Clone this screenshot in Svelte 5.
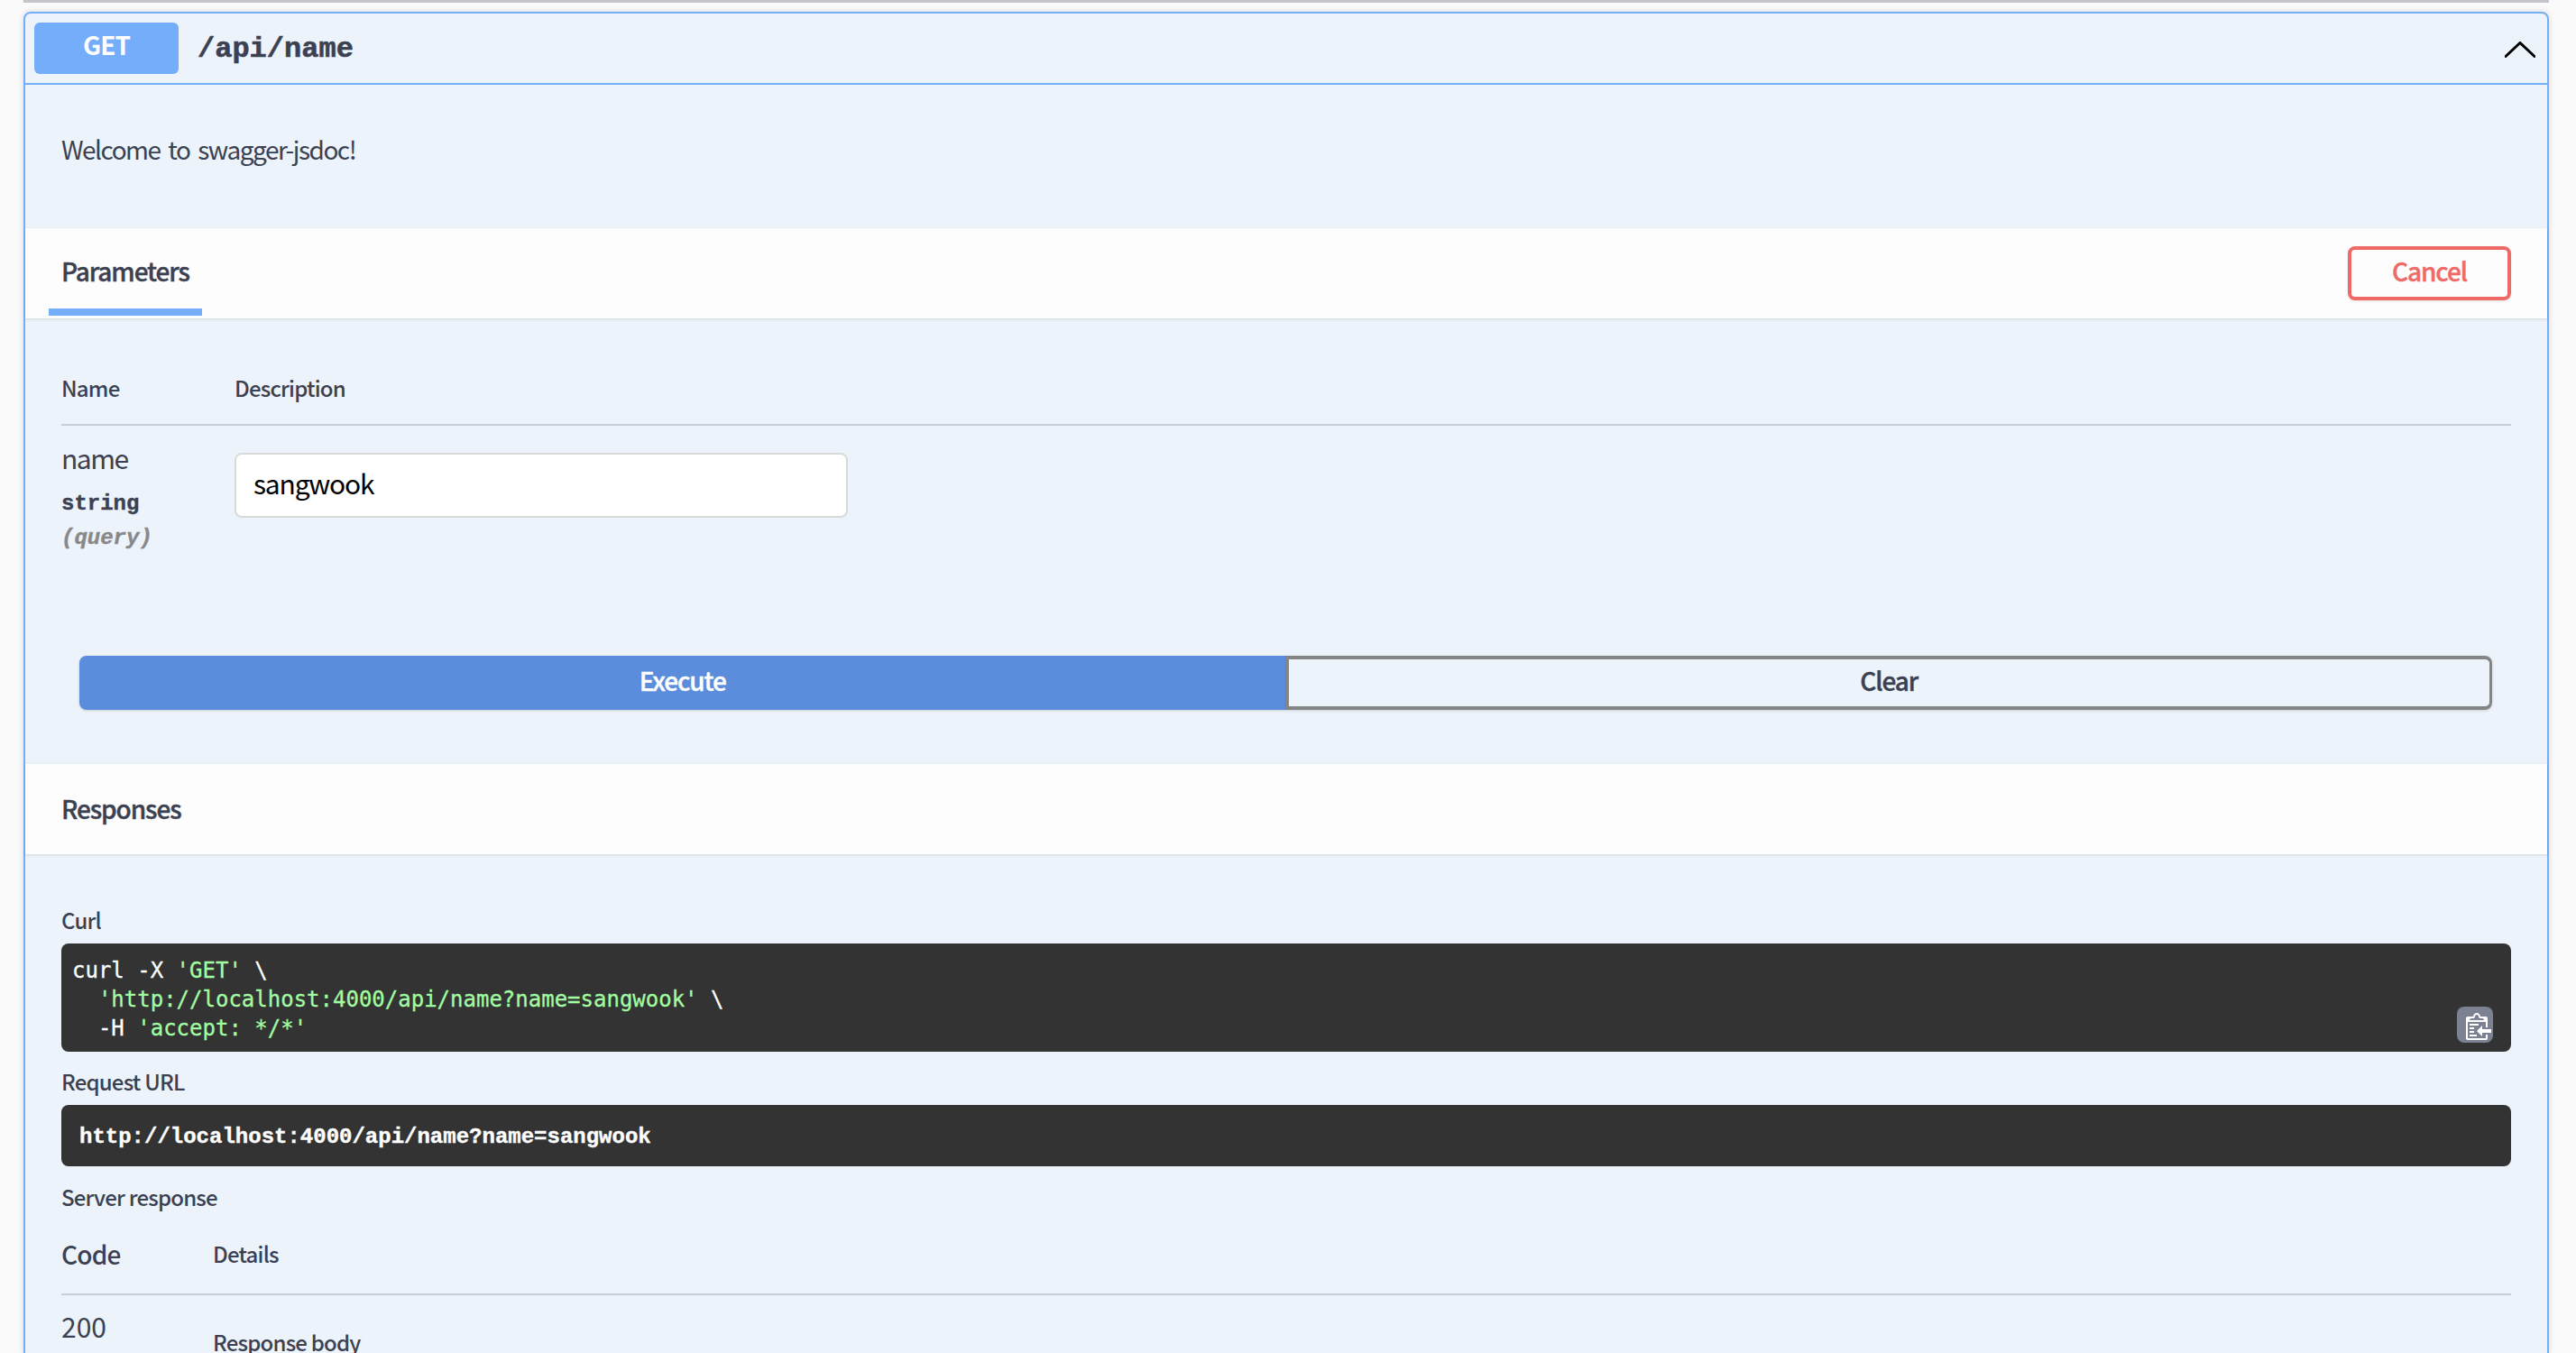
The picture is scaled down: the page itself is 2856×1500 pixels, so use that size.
<script>
  const curlPrefix = "curl -X ";
</script>

<div class="page">
  <div class="topline"></div>
  <section class="card">
    <header class="summary">
      <span class="method">GET</span>
      <span class="path">/api/name</span>
      <svg class="chevron" viewBox="0 0 34 18" aria-hidden="true"><path d="M1 16.5 17 1.5l16 15" /></svg>
    </header>

    <div class="desc">Welcome to swagger-jsdoc!</div>

    <div class="band params">
      <div class="tab">Parameters</div>
      <button class="cancel">Cancel</button>
    </div>

    <div class="params-body">
      <div class="param-head">
        <span>Name</span>
        <span>Description</span>
      </div>
      <div class="param-row">
        <div class="param-meta">
          <div class="pname">name</div>
          <div class="ptype">string</div>
          <div class="pin">(query)</div>
        </div>
        <input class="pinput" value="sangwook" />
      </div>
      <div class="actions">
        <button class="execute">Execute</button>
        <button class="clear">Clear</button>
      </div>
    </div>

    <div class="band responses"><span class="band-title">Responses</span></div>

    <div class="resp-body">
      <div class="label">Curl</div>
      <div class="curl">
        <pre>{curlPrefix}<span class="str">'GET'</span> \
  <span class="str">'http://localhost:4000/api/name?name=sangwook'</span> \
  -H <span class="str">'accept: */*'</span></pre>
        <button class="copy" aria-label="Copy">
          <svg viewBox="0 0 14 16" aria-hidden="true"><path fill-rule="evenodd" d="M2 13h4v1H2v-1zm5-6H2v1h5V7zm2 3V8l-3 3 3 3v-2h5v-2H9zM4.5 9H2v1h2.5V9zM2 12h2.5v-1H2v1zm9 1h1v2c-.02.28-.11.52-.3.7-.19.18-.42.28-.7.3H1c-.55 0-1-.45-1-1V4c0-.55.45-1 1-1h3c0-1.11.89-2 2-2 1.11 0 2 .89 2 2h3c.55 0 1 .45 1 1v5h-1V6H1v9h10v-2zM2 5h8c0-.55-.45-1-1-1H8c-.55 0-1-.45-1-1s-.45-1-1-1-1 .45-1 1-.45 1-1 1H3c-.55 0-1 .45-1 1z" /></svg>
        </button>
      </div>
      <div class="label req">Request URL</div>
      <div class="url">http://localhost:4000/api/name?name=sangwook</div>
      <div class="label srv">Server response</div>
      <div class="resp-head">
        <span class="code-h">Code</span>
        <span class="label">Details</span>
      </div>
      <div class="resp-row">
        <span class="code">200</span>
        <span class="label body-label">Response body</span>
      </div>
    </div>
  </section>
</div>

<style>
  :global(body) {
    margin: 0;
    background: #fafafa;
  }
  .page {
    height: 1500px;
    overflow: hidden;
    padding-left: 26px;
    box-sizing: border-box;
    font-family: "Noto Sans CJK KR", "Noto Sans", sans-serif;
    color: #3b4151;
  }
  .topline {
    width: 2800px;
    height: 3px;
    background: #c4c4cc;
  }
  .card {
    width: 2800px;
    box-sizing: border-box;
    margin-top: 10px;
    border: 2px solid #75aefa;
    border-radius: 8px;
    background: #ecf3fb;
    box-shadow: 0 0 6px rgba(0, 0, 0, 0.15);
  }
  .summary {
    display: flex;
    align-items: center;
    height: 77px;
    box-sizing: content-box;
    border-bottom: 2px solid #75aefa;
    padding-left: 10px;
  }
  .method {
    width: 160px;
    height: 57px;
    margin-top: -1px;
    border-radius: 6px;
    background: #74adf9;
    color: #fff;
    font-size: 28px;
    font-weight: 700;
    line-height: 49px;
    letter-spacing: -1px;
    text-align: center;
  }
  .path {
    margin: 3px 0 0 21px;
    font-family: "Liberation Mono", monospace;
    font-weight: 700;
    font-size: 32px;
    line-height: 40px;
    -webkit-text-stroke: 0.6px #3b4151;
  }
  .chevron {
    width: 34px;
    height: 18px;
    margin-left: auto;
    margin-right: 13px;
    margin-top: 3px;
  }
  .chevron path {
    fill: none;
    stroke: #000;
    stroke-width: 3;
    stroke-linecap: round;
  }
  .desc {
    height: 159px;
    box-sizing: border-box;
    padding: 50px 0 0 40px;
    font-size: 28px;
    line-height: 42px;
    letter-spacing: -1.5px;
    word-spacing: 4px;
  }
  .band {
    height: 100px;
    background: #fdfdfe;
    box-shadow: 0 1px 3px rgba(0, 0, 0, 0.12);
    display: flex;
    align-items: center;
    font-size: 28px;
    font-weight: 500;
    letter-spacing: -1.1px;
    -webkit-text-stroke: 0.4px currentColor;
  }
  .params {
    justify-content: space-between;
  }
  .tab {
    align-self: stretch;
    box-sizing: border-box;
    margin: 0 0 3px 26px;
    padding: 5px 14px 0;
    display: flex;
    align-items: center;
    border-bottom: 8px solid #75aefa;
  }
  .cancel {
    width: 181px;
    height: 60px;
    margin: 0 40px 0 0;
    border: 4px solid #ef6a67;
    border-radius: 8px;
    background: transparent;
    color: #ef6a67;
    font: 500 28px/1 "Noto Sans CJK KR", "Noto Sans", sans-serif;
    letter-spacing: -1.1px;
    padding: 0 0 6px;
    box-shadow: 0 1px 3px rgba(0, 0, 0, 0.1);
  }
  .params-body {
    padding: 60px 40px 60px 40px;
  }
  .param-head {
    display: grid;
    grid-template-columns: 192px 1fr;
    font-size: 24px;
    font-weight: 500;
    line-height: 34px;
    letter-spacing: -0.8px;
    padding-bottom: 23px;
    border-bottom: 2px solid #c8ced8;
  }
  .param-row {
    display: grid;
    grid-template-columns: 192px 1fr;
    align-items: start;
  }
  .param-meta {
    padding-top: 13px;
  }
  .pname {
    font-size: 30px;
    line-height: 44px;
    letter-spacing: -1.5px;
  }
  .ptype {
    margin-top: 13px;
    font: 700 24px/34px "Liberation Mono", monospace;
    -webkit-text-stroke: 0.4px #3b4151;
  }
  .pin {
    margin-top: 4px;
    font: italic 700 24px/34px "Liberation Mono", monospace;
    color: #888;
    -webkit-text-stroke: 0.4px #888;
  }
  .pinput {
    width: 680px;
    height: 72px;
    margin-top: 30px;
    box-sizing: border-box;
    border: 2px solid #d9d9d9;
    border-radius: 8px;
    background: #fff;
    padding: 0 0 7px 19px;
    font: 400 30px "Noto Sans CJK KR", "Noto Sans", sans-serif;
    letter-spacing: -1.2px;
    color: #000;
  }
  .actions {
    display: flex;
    margin: 113px 21px 0 20px;
    height: 60px;
  }
  .actions button {
    flex: 1 1 50%;
    height: 60px;
    padding: 0 0 6px;
    font: 500 28px/1 "Noto Sans CJK KR", "Noto Sans", sans-serif;
    letter-spacing: -1.1px;
    -webkit-text-stroke: 0.4px currentColor;
    box-shadow: 0 1px 3px rgba(0, 0, 0, 0.15);
  }
  .execute {
    border: none;
    border-radius: 8px 0 0 8px;
    background: #5c8ddc;
    color: #fff;
  }
  .clear {
    border: 4px solid #858585;
    border-left-width: 3px;
    border-right-width: 3px;
    border-radius: 0 8px 8px 0;
    background: transparent;
    color: #3b4151;
  }
  .responses {
    padding-left: 40px;
  }
  .band-title {
    margin-top: -2px;
  }
  .resp-body {
    padding: 56px 40px 0;
  }
  .label {
    font-size: 24px;
    font-weight: 500;
    line-height: 34px;
    letter-spacing: -0.8px;
  }
  .curl {
    position: relative;
    margin-top: 9px;
    height: 120px;
    box-sizing: border-box;
    padding: 14px 0 0 12px;
    border-radius: 8px;
    background: #333;
  }
  pre {
    margin: 0;
    font: 400 24px/32px "DejaVu Sans Mono", monospace;
    color: #fff;
    -webkit-text-stroke: 0.3px currentColor;
  }
  .str {
    color: #a2fca2;
  }
  .copy {
    position: absolute;
    right: 20px;
    bottom: 10px;
    width: 40px;
    height: 40px;
    padding: 0;
    border: none;
    border-radius: 8px;
    background: #7d8293;
    display: flex;
    align-items: center;
    justify-content: center;
  }
  .copy svg {
    width: 28px;
    height: 32px;
    fill: #fff;
    margin-left: 8px;
    margin-top: 2px;
  }
  .req {
    margin-top: 16px;
  }
  .url {
    margin-top: 9px;
    height: 68px;
    padding-left: 20px;
    border-radius: 8px;
    background: #333;
    color: #fff;
    font: 700 24px/72px "Liberation Mono", monospace;
    -webkit-text-stroke: 0.4px #fff;
  }
  .srv {
    margin-top: 17px;
  }
  .resp-head {
    margin-top: 29px;
    display: grid;
    grid-template-columns: 168px 1fr;
    align-items: center;
    height: 34px;
    padding-bottom: 27px;
    border-bottom: 2px solid #c8ced8;
  }
  .code-h {
    font-size: 28px;
    font-weight: 500;
    line-height: 34px;
    letter-spacing: -0.8px;
  }
  .resp-row {
    display: grid;
    grid-template-columns: 168px 1fr;
    align-items: start;
  }
  .code {
    margin-top: 17px;
    font-size: 30px;
    line-height: 34px;
  }
  .body-label {
    margin-top: 35px;
  }
</style>
